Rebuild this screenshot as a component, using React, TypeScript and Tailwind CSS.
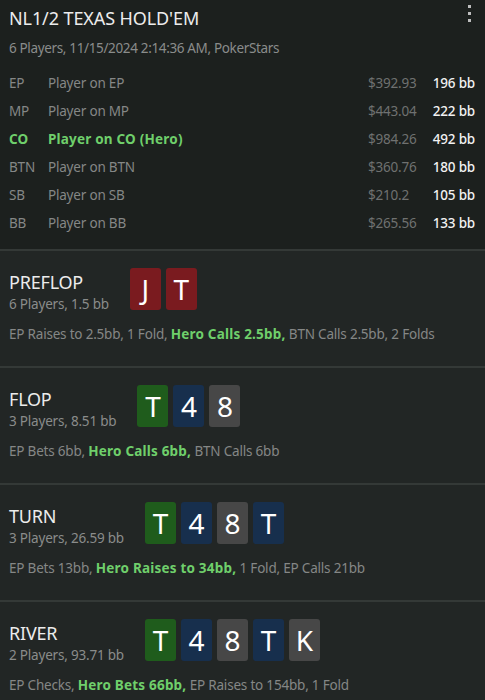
import { useState } from "react";

type Card = { rank: string; color: "red" | "green" | "blue" | "gray" };

const players = [
    { pos: "EP", name: "Player on EP", usd: "$392.93", bb: "196 bb" },
    { pos: "MP", name: "Player on MP", usd: "$443.04", bb: "222 bb" },
    { pos: "CO", name: "Player on CO (Hero)", usd: "$984.26", bb: "492 bb", hero: true },
    { pos: "BTN", name: "Player on BTN", usd: "$360.76", bb: "180 bb" },
    { pos: "SB", name: "Player on SB", usd: "$210.2", bb: "105 bb" },
    { pos: "BB", name: "Player on BB", usd: "$265.56", bb: "133 bb" },
];

const streets: { name: string; info: string; cards: Card[]; before: string; hero: string; after: string }[] = [
    {
        name: "PREFLOP",
        info: "6 Players, 1.5 bb",
        cards: [{ rank: "J", color: "red" }, { rank: "T", color: "red" }],
        before: "EP Raises to 2.5bb, 1 Fold,",
        hero: "Hero Calls 2.5bb,",
        after: "BTN Calls 2.5bb, 2 Folds",
    },
    {
        name: "FLOP",
        info: "3 Players, 8.51 bb",
        cards: [{ rank: "T", color: "green" }, { rank: "4", color: "blue" }, { rank: "8", color: "gray" }],
        before: "EP Bets 6bb,",
        hero: "Hero Calls 6bb,",
        after: "BTN Calls 6bb",
    },
    {
        name: "TURN",
        info: "3 Players, 26.59 bb",
        cards: [{ rank: "T", color: "green" }, { rank: "4", color: "blue" }, { rank: "8", color: "gray" }, { rank: "T", color: "blue" }],
        before: "EP Bets 13bb,",
        hero: "Hero Raises to 34bb,",
        after: "1 Fold, EP Calls 21bb",
    },
    {
        name: "RIVER",
        info: "2 Players, 93.71 bb",
        cards: [{ rank: "T", color: "green" }, { rank: "4", color: "blue" }, { rank: "8", color: "gray" }, { rank: "T", color: "blue" }, { rank: "K", color: "gray" }],
        before: "EP Checks,",
        hero: "Hero Bets 66bb,",
        after: "EP Raises to 154bb, 1 Fold",
    },
];

const cardBg = {
    red: "bg-[#7a1b1f]",
    green: "bg-[#1f5c1c]",
    blue: "bg-[#172f4d]",
    gray: "bg-[#474747]",
};

function PlayingCard({ card }: { card: Card }) {
    return (
        <div className={`w-[31px] h-[42px] rounded-[3px] flex items-center justify-center text-[28px] text-white ${cardBg[card.color]}`}>
            {card.rank}
        </div>
    );
}

export default function App() {
    const [open, setOpen] = useState(false);

    return (
        <div className="w-[485px] h-[700px] overflow-hidden bg-[#222625] font-['Segoe_UI','Noto_Sans',sans-serif]">
            {/* header + players */}
            <div className="bg-[#1c201e] h-[251px] border-b-2 border-[#343937]">
                <div className="flex justify-between pl-[9px] pr-[14px]">
                    <div>
                        <h1 className="text-[18px] leading-[24px] pt-[6px] tracking-[-0.1px] text-[#ececec]">NL1/2 TEXAS HOLD'EM</h1>
                        <p className="text-[13.5px] leading-[20px] mt-[8px] tracking-[-0.35px] text-[#8a8c8b]">6 Players, 11/15/2024 2:14:36 AM, PokerStars</p>
                    </div>
                    <button onClick={() => setOpen(!open)} className="flex flex-col gap-[4px] pt-[5px] h-fit">
                        <span className="w-[3px] h-[3px] bg-[#bdbdbd]" />
                        <span className="w-[3px] h-[3px] bg-[#bdbdbd]" />
                        <span className="w-[3px] h-[3px] bg-[#bdbdbd]" />
                    </button>
                </div>
                <div className="mt-[11px] pl-[9px] pr-[10px]">
                    {players.map((p) => (
                        <div key={p.pos} className="flex items-center h-[28px] text-[13.5px] tracking-[-0.2px]">
                            <span className={`w-[39px] ${p.hero ? "text-[#6fcf6b] font-bold tracking-[0.2px]" : "text-[#858786]"}`}>{p.pos}</span>
                            <span className={`flex-1 ${p.hero ? "text-[#6fcf6b] font-bold tracking-[0.2px]" : "text-[#858786]"}`}>{p.name}</span>
                            <span className="w-[57px] text-[#6f7170]">{p.usd}</span>
                            <span className="w-[50px] text-right text-[#f2f2f2] font-medium">{p.bb}</span>
                        </div>
                    ))}
                </div>
            </div>

            {streets.map((s) => (
                <div key={s.name} className="h-[117px] border-b-2 border-[#343937] pl-[9px] pt-[17px]">
                    <div className="flex items-start gap-[21px]">
                        <div className="mt-[2px]">
                            <div className="text-[18px] leading-[24px] tracking-[-0.2px] text-[#ececec]">{s.name}</div>
                            <div className="text-[13.5px] leading-[20px] tracking-[-0.2px] text-[#8a8c8b]">{s.info}</div>
                        </div>
                        <div className="flex gap-[5px]">
                            {s.cards.map((c, i) => (
                                <PlayingCard key={i} card={c} />
                            ))}
                        </div>
                    </div>
                    <p className="mt-[10px] text-[13.5px] leading-[20px] tracking-[-0.2px] text-[#858786]">
                        {s.before} <span className="text-[#6fcf6b] font-bold tracking-[0.2px]">{s.hero}</span> {s.after}
                    </p>
                </div>
            ))}
        </div>
    );
}
